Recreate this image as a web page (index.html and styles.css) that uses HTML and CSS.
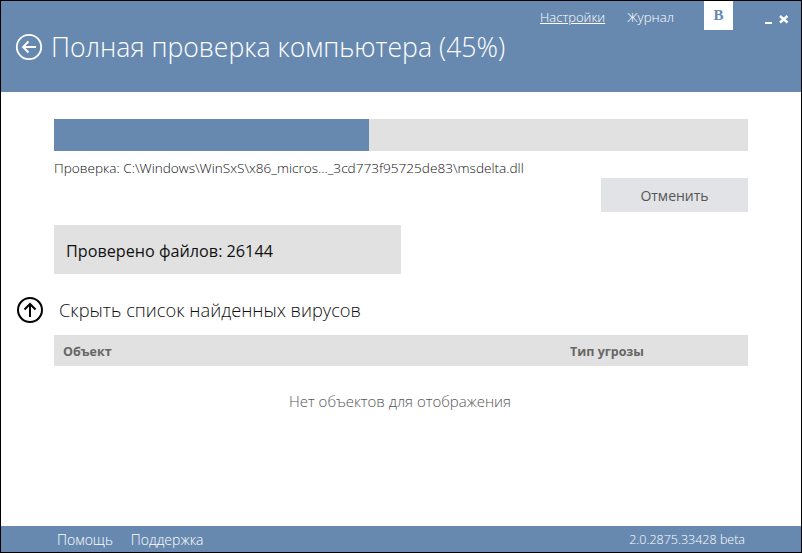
FILE: index.html
```html
<!DOCTYPE html>
<html>

<head>
    <title>Полная проверка</title>
    <link rel="stylesheet" href="styles.css">
</head>

<body>
    <div class="window">
        <div class="header">
            <div class="top-bar">
                <a class="top-link underlined">Настройки</a>
                <a class="top-link journal">Журнал</a>
                <div class="vk-box">В</div>
                <div class="win-buttons">
                    <svg width="30" height="12" viewBox="0 0 30 12">
                        <rect x="0" y="9" width="7" height="2" fill="#fff" />
                        <path d="M15 3 L22.5 9.5 M22.5 3 L15 9.5" stroke="#fff" stroke-width="2.4" fill="none" />
                    </svg>
                </div>
            </div>
            <div class="title-row">
                <svg class="round-icon" width="28" height="28" viewBox="0 0 28 28">
                    <circle cx="14" cy="14" r="12.2" fill="none" stroke="#fff" stroke-width="1.8" />
                    <path d="M21 14 H8 M13.5 8.5 L8 14 L13.5 19.5" fill="none" stroke="#fff" stroke-width="1.8" />
                </svg>
                <h1 class="title">Полная проверка компьютера (45%)</h1>
            </div>
        </div>

        <div class="content">
            <div class="progress">
                <div class="progress-fill"></div>
            </div>
            <div class="path-line">Проверка: C:\Windows\WinSxS\x86_micros..._3cd773f95725de83\msdelta.dll</div>
            <div class="actions">
                <button class="cancel">Отменить</button>
            </div>
            <div class="stat-box">Проверено файлов: 26144</div>

            <div class="list-head">
                <svg class="round-icon" width="28" height="28" viewBox="0 0 28 28">
                    <circle cx="14" cy="14" r="12" fill="none" stroke="#000" stroke-width="2" />
                    <path d="M14 21 V8 M8.5 13.5 L14 8 L19.5 13.5" fill="none" stroke="#000" stroke-width="2" />
                </svg>
                <span class="list-title">Скрыть список найденных вирусов</span>
            </div>

            <div class="table-head">
                <div class="col-object">Объект</div>
                <div class="col-type">Тип угрозы</div>
            </div>
            <div class="empty">Нет объектов для отображения</div>
        </div>

        <div class="footer">
            <a class="foot-link">Помощь</a>
            <a class="foot-link">Поддержка</a>
            <span class="version">2.0.2875.33428 beta</span>
        </div>
    </div>
</body>

</html>
```

FILE: styles.css
```css
html,
body {
    margin: 0;
    padding: 0;
}

body {
    font-family: "Open Sans", "Noto Sans", sans-serif;
    background: #fff;
}

.window {
    width: 802px;
    height: 553px;
    box-sizing: border-box;
    border: 1px solid #000;
    display: flex;
    flex-direction: column;
}

.header {
    height: 91px;
    background-color: #6789b0;
    color: #fff;
}

.top-bar {
    height: 29px;
    display: flex;
    align-items: flex-start;
}

.top-link {
    font-size: 13px;
    font-weight: 300;
    color: #fff;
    line-height: 16px;
    margin-top: 8px;
}

.underlined {
    margin-left: 539px;
    text-decoration: underline;
}

.journal {
    margin-left: 22px;
    font-size: 13.3px;
}

.vk-box {
    width: 29px;
    height: 29px;
    margin-left: 30px;
    background: #fff;
    color: #6789b0;
    font-family: "Liberation Serif", serif;
    font-weight: bold;
    font-size: 15px;
    line-height: 29px;
    text-align: center;
}

.win-buttons {
    margin-left: 32px;
    margin-top: 7px;
}

.title-row {
    display: flex;
    align-items: center;
    padding-left: 14px;
}

.title {
    margin: 0 0 0 8px;
    font-size: 26.6px;
    font-weight: 300;
    line-height: 34px;
}

.content {
    flex: 1;
    padding: 27px 53px 0 53px;
}

.progress {
    height: 32px;
    background-color: #e1e1e1;
}

.progress-fill {
    width: 315px;
    height: 100%;
    background-color: #6789b0;
}

.path-line {
    margin-top: 9px;
    font-size: 13.6px;
    font-weight: 300;
    line-height: 16px;
    color: #111;
}

.actions {
    margin-top: 2px;
    display: flex;
    justify-content: flex-end;
}

.cancel {
    width: 147px;
    height: 34px;
    border: none;
    background-color: #e1e3e6;
    color: #555;
    font-family: inherit;
    font-size: 14px;
    font-weight: 400;
}

.stat-box {
    width: 347px;
    height: 49px;
    margin-top: 13px;
    padding-left: 12px;
    box-sizing: border-box;
    background-color: #e1e1e1;
    font-size: 16.2px;
    line-height: 52px;
    color: #111;
}

.list-head {
    display: flex;
    align-items: center;
    height: 28px;
    margin: 22px 0 0 -38px;
}

.list-title {
    margin: 0 0 2px 15px;
    font-size: 18.3px;
    font-weight: 300;
    color: #111;
}

.table-head {
    height: 31px;
    margin-top: 11px;
    padding-top: 1px;
    box-sizing: border-box;
    display: flex;
    align-items: center;
    background-color: #e1e1e1;
    font-size: 12.5px;
    font-weight: 700;
    color: #666;
}

.col-object {
    width: 507px;
    padding-left: 9px;
}

.empty {
    margin-top: 25px;
    padding-right: 2px;
    text-align: center;
    font-size: 15px;
    font-weight: 300;
    color: #555;
}

.footer {
    height: 26px;
    display: flex;
    align-items: center;
    background-color: #6789b0;
    color: #fff;
    font-size: 14px;
    font-weight: 300;
    padding-left: 56px;
}

.foot-link {
    margin-right: 18px;
}

.version {
    margin-left: auto;
    margin-right: 56px;
    font-size: 12.5px;
}
```
